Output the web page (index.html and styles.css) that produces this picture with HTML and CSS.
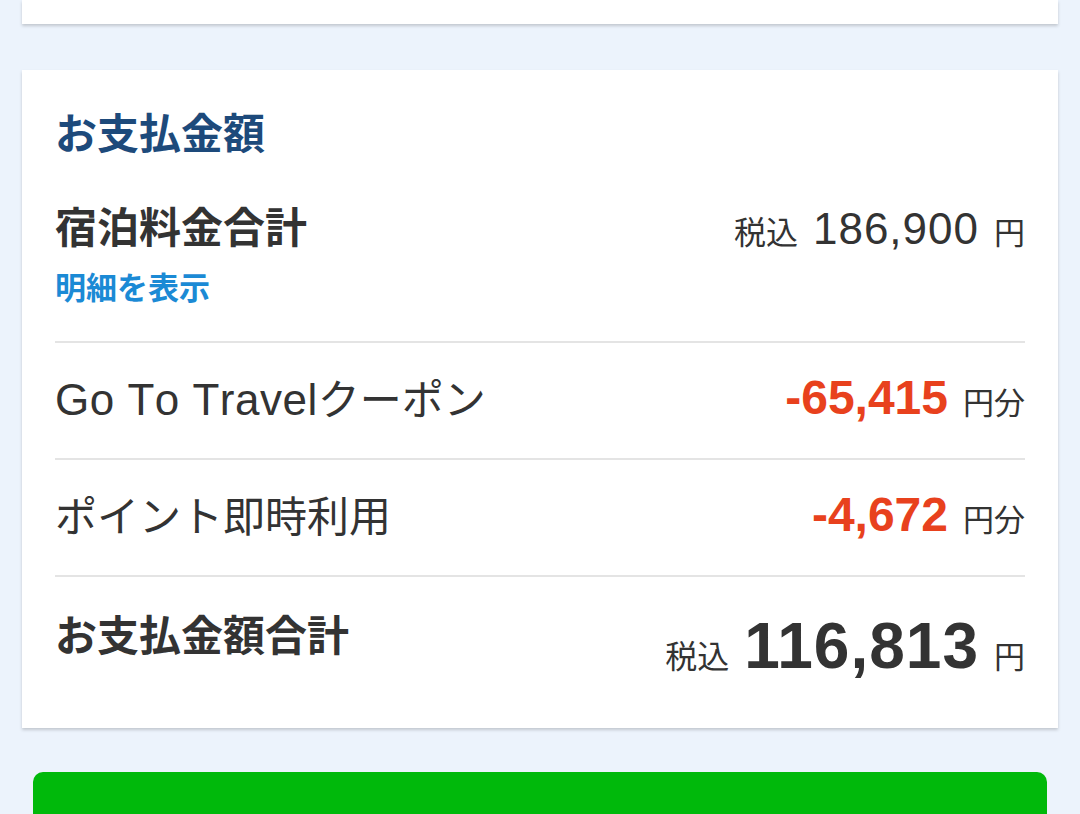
FILE: index.html
```html
<!DOCTYPE html>
<html lang="ja">
<head>
	<meta charset="UTF-8">
	<title>お支払金額</title>
	<link rel="stylesheet" href="styles.css">
</head>
<body>

	<!-- 上のカード（はみ出し部分） -->
	<div class="card card-top"></div>

	<!-- お支払金額 -->
	<div class="card payment">
		<h2 class="payment-title">お支払金額</h2>

		<div class="row row-stay">
			<div class="row-left">
				<div class="label label-bold">宿泊料金合計</div>
				<a href="#" class="detail-link">明細を表示</a>
			</div>
			<div class="price">
				<span class="tax">税込</span>
				<span class="num">186,900</span>
				<span class="unit">円</span>
			</div>
		</div>

		<div class="row row-line">
			<div class="label"><span class="latin">Go To Travel</span>クーポン</div>
			<div class="price">
				<span class="num num-minus">-65,415</span>
				<span class="unit">円分</span>
			</div>
		</div>

		<div class="row row-line">
			<div class="label">ポイント即時利用</div>
			<div class="price">
				<span class="num num-minus">-4,672</span>
				<span class="unit">円分</span>
			</div>
		</div>

		<div class="row row-total">
			<div class="label label-bold">お支払金額合計</div>
			<div class="price price-total">
				<span class="tax">税込</span>
				<span class="num num-total">116,813</span>
				<span class="unit">円</span>
			</div>
		</div>
	</div>

	<button type="button" class="btn-next"></button>

</body>
</html>
```

FILE: styles.css
```css
body{
	margin: 0;
	background-color: #ecf3fc;
	font-family: "Liberation Sans", "Noto Sans CJK JP", sans-serif;
	color: #333;
	overflow: hidden;
}

.card{
	margin: 0 22px;
	background-color: #fff;
	box-shadow: 0 2px 3px rgba(0,0,0,0.18);
}
.card-top{height: 24px;}

.payment{
	margin-top: 46px;
	padding: 40px 33px 0;
}

.payment-title{
	margin: 0;
	font-size: 42px;
	line-height: 50px;
	font-weight: bold;
	color: #1d4a7b;
}

.row{
	display: flex;
	justify-content: space-between;
}
.row-stay{
	margin-top: 44px;
	height: 137px;
	align-items: flex-start;
}
.row-line{
	height: 115px;
	align-items: center;
	border-top: 2px solid #e4e4e4;
}
.row-total{
	height: 116px;
	padding-top: 35px;
	align-items: flex-start;
	border-top: 2px solid #e4e4e4;
}

.label{
	font-size: 42px;
	line-height: 50px;
}
.label .latin{
	font-size: 44px;
	font-kerning: none;
	letter-spacing: 0.5px;
}
.label-bold{font-weight: bold;}

.detail-link{
	display: block;
	margin-top: 15px;
	font-size: 31px;
	line-height: 40px;
	font-weight: bold;
	color: #1b8ad5;
	text-decoration: none;
}

.price{
	display: flex;
	align-items: baseline;
	gap: 15px;
	line-height: 50px;
}
.tax{font-size: 32px;}
.num{
	font-size: 44px;
	letter-spacing: 1px;
}
.num-minus{
	font-size: 48px;
	letter-spacing: 0;
	font-weight: bold;
	color: #e8411d;
}
.num-total{
	font-size: 64px;
	line-height: 64px;
	letter-spacing: 1px;
	font-weight: bold;
}
.unit{font-size: 31px;}
.price-total{
	margin-top: 2px;
	line-height: 64px;
}

.btn-next{
	display: block;
	width: 1014px;
	height: 100px;
	margin: 44px 0 0 33px;
	border: none;
	border-radius: 10px;
	background-color: #00b90b;
	cursor: pointer;
}
```
